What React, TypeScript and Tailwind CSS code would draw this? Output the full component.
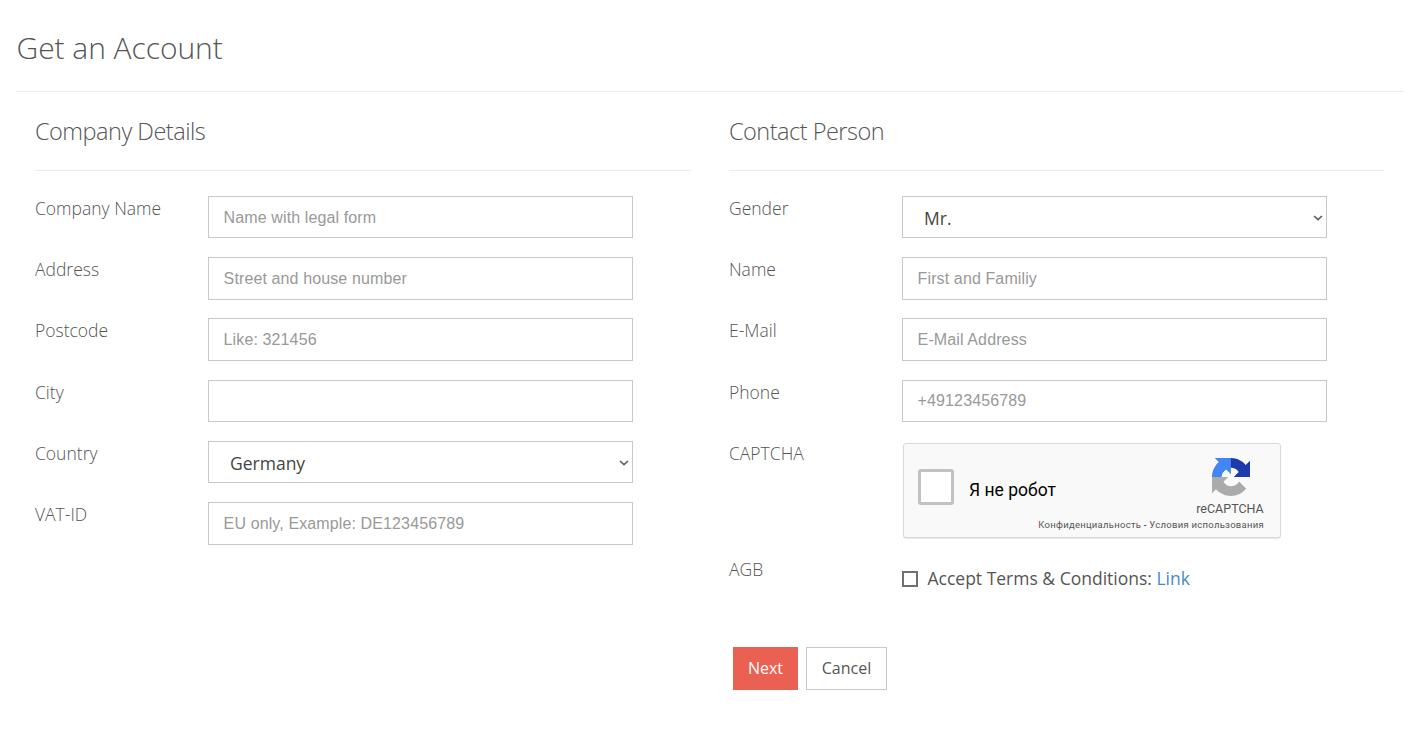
import type { ReactNode } from 'react';

const inputClass =
  "block h-full w-full border border-[#c8c8c8] bg-white pt-px pl-[14.6px] pr-3 font-['Liberation_Sans',Arial,sans-serif] text-[16px] tracking-[0.12px] text-[#555] placeholder:text-[#999] placeholder:opacity-100 outline-none";

function Row({ label, children }: { label: string; children: ReactNode }) {
  return (
    <div className="flex h-[61.25px]">
      <div className="w-[173px] shrink-0 text-[17.5px] leading-[25px] font-light">{label}</div>
      <div className="h-[42.5px] w-[425px]">{children}</div>
    </div>
  );
}

function TextRow({ label, placeholder }: { label: string; placeholder?: string }) {
  return (
    <Row label={label}>
      <input type="text" placeholder={placeholder} className={inputClass} />
    </Row>
  );
}

function SelectRow({ label, value }: { label: string; value: string }) {
  return (
    <Row label={label}>
      <button
        type="button"
        className="flex h-full w-full items-center justify-between border border-[#c8c8c8] bg-white pl-[21px] pr-[3px] text-left text-[17.5px] text-[#444]"
      >
        <span className="pt-[3px]">{value}</span>
        <svg className="mt-px" width="10" height="6" viewBox="0 0 10 6" fill="none" stroke="#606060" strokeWidth="1.7">
          <path d="M1 1l4 3.7L9 1" />
        </svg>
      </button>
    </Row>
  );
}

function SectionTitle({ children }: { children: ReactNode }) {
  return (
    <h2 className="h-[79px] border-b border-[#ececec] pt-[23px] text-[23.5px] leading-[33px] font-light tracking-[-0.5px]">
      {children}
    </h2>
  );
}

function CaptchaLogo() {
  return (
    <svg width="38" height="38" viewBox="0 0 64 64">
      <path
        fill="#1c3aa9"
        d="M64 31.955l-.033-1.37V4.687l-7.16 7.16C50.948 4.674 42.033.093 32.05.093c-10.4 0-19.622 4.96-25.458 12.64l11.736 11.86a15.55 15.55 0 0 1 4.754-5.334c2.05-1.6 4.952-2.906 8.968-2.906.485 0 .86.057 1.135.163 4.976.393 9.288 3.14 11.828 7.124l-8.307 8.307L64 31.953"
      />
      <path
        fill="#4285f4"
        d="M31.862.094l-1.37.033H4.594l7.16 7.16C4.58 13.147 0 22.06 0 32.046c0 10.4 4.96 19.622 12.64 25.458L24.5 45.768a15.55 15.55 0 0 1-5.334-4.754c-1.6-2.05-2.906-4.952-2.906-8.968 0-.485.057-.86.163-1.135.393-4.976 3.14-9.288 7.124-11.828l8.307 8.307L31.86.095"
      />
      <path
        fill="#ababab"
        d="M.001 32.045l.033 1.37v25.898l7.16-7.16c5.86 7.173 14.774 11.754 24.76 11.754 10.4 0 19.622-4.96 25.458-12.64l-11.736-11.86a15.55 15.55 0 0 1-4.754 5.334c-2.05 1.6-4.952 2.906-8.968 2.906-.485 0-.86-.057-1.135-.163-4.976-.393-9.288-3.14-11.828-7.124l8.307-8.307c-10.522.04-22.4.066-27.295-.005"
      />
    </svg>
  );
}

function Captcha() {
  return (
    <div className="mt-[2.2px] ml-px flex h-[95px] w-[377.5px] flex-col rounded-[3px] border border-[#dadada] bg-[#f9f9f9] font-[Roboto,sans-serif] shadow-[0_1px_1px_rgba(0,0,0,0.1)]">
      <div className="flex h-[74px] pl-[14px] pr-[15.5px]">
        <div className="mt-[25px] size-[36px] rounded-[3px] border-[3px] border-[#c1c1c1] bg-white" />
        <div className="ml-[15px] pt-[34px] text-[17.5px] leading-[24px] text-black">Я не робот</div>
        <div className="ml-auto flex w-[68px] flex-col items-center pt-[14px]">
          <div className="pl-px">
            <CaptchaLogo />
          </div>
          <div className="pt-[4px] text-[12.5px] leading-[17px] text-[#555]">reCAPTCHA</div>
        </div>
      </div>
      <div className="pr-[15.5px] text-right text-[9.5px] leading-[14px] tracking-[0.27px] text-[#555]">
        Конфиденциальность<span className="text-black"> - </span>Условия использования
      </div>
    </div>
  );
}

export default function App() {
  return (
    <main className="h-[731px] w-[1421px] overflow-hidden bg-white pr-[17px] pl-4 font-['Open_Sans','Noto_Sans',sans-serif] text-[#555]">
      <h1 className="h-[92px] border-b border-[#ececec] pt-[27px] pl-[0.5px] text-[30px] leading-[41px] font-light tracking-[-0.05px]">
        Get an Account
      </h1>
      <div className="grid grid-cols-2">
        <section className="px-[19px]">
          <SectionTitle>Company Details</SectionTitle>
          <div className="pt-[24.8px]">
            <TextRow label="Company Name" placeholder="Name with legal form" />
            <TextRow label="Address" placeholder="Street and house number" />
            <TextRow label="Postcode" placeholder="Like: 321456" />
            <TextRow label="City" />
            <SelectRow label="Country" value="Germany" />
            <TextRow label="VAT-ID" placeholder="EU only, Example: DE123456789" />
          </div>
        </section>
        <section className="pr-5 pl-[19px]">
          <SectionTitle>Contact Person</SectionTitle>
          <div className="pt-[24.8px]">
            <SelectRow label="Gender" value="Mr." />
            <TextRow label="Name" placeholder="First and Familiy" />
            <TextRow label="E-Mail" placeholder="E-Mail Address" />
            <TextRow label="Phone" placeholder="+49123456789" />
            <div className="flex h-[116.2px]">
              <div className="w-[173px] shrink-0 text-[17.5px] leading-[25px] font-light">CAPTCHA</div>
              <Captcha />
            </div>
            <div className="flex h-[90px]">
              <div className="w-[173px] shrink-0 text-[17.5px] leading-[25px] font-light">AGB</div>
              <label className="flex h-[43px] items-center text-[17.5px]">
                <input
                  type="checkbox"
                  className="mt-px mr-[9.5px] size-4 appearance-none border-2 border-[#707070] bg-white"
                />
                <span className="leading-[25px]">
                  Accept Terms &amp; Conditions: <a className="text-[#428bca]">Link</a>
                </span>
              </label>
            </div>
            <div className="flex gap-2 pl-1 text-[16px]">
              <button type="button" className="h-[43px] w-[65px] bg-[#ea6153] text-white">
                Next
              </button>
              <button type="button" className="h-[43px] w-[81px] border border-[#c8c8c8] bg-white">
                Cancel
              </button>
            </div>
          </div>
        </section>
      </div>
    </main>
  );
}
